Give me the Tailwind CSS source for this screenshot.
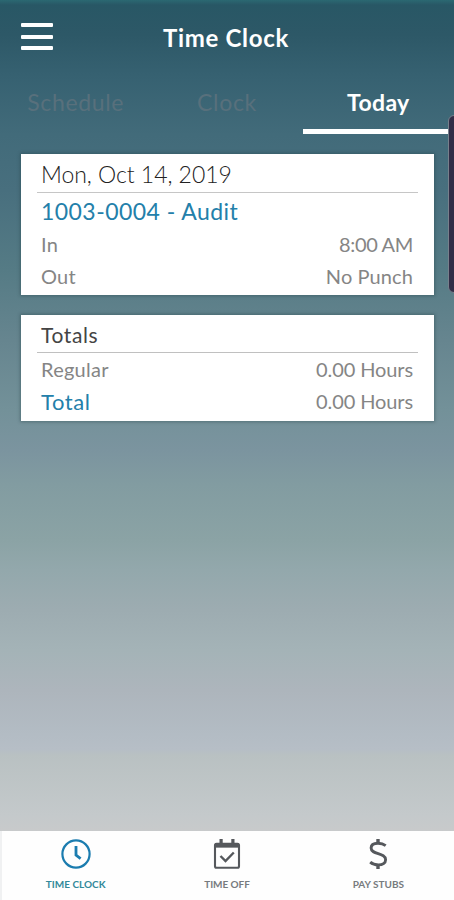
<!DOCTYPE html>
<html lang="en">
<head>
<meta charset="utf-8">
<title>Time Clock</title>
<script src="https://cdn.jsdelivr.net/npm/@tailwindcss/browser@4"></script>
</head>
<body class="relative flex h-[900px] w-[454px] flex-col overflow-hidden font-['Lato',sans-serif] bg-[linear-gradient(180deg,#2b6872_0px,#285765_5px,#2d5867_35px,#366171_75px,#426b7a_135px,#486f7e_190px,#557b85_270px,#66858f_340px,#739199_410px,#7b949f_450px,#829ca1_485px,#8ba3a5_540px,#93a8ac_570px,#9dacb1_610px,#a4b3b7_650px,#adb5bc_690px,#b3bcc4_735px,#b6bec6_749px,#b9c1c2_755px,#c4c9cb_815px,#c8cacb_831px)]">
  <header class="flex h-[75px] shrink-0 items-center px-[21px]">
    <button class="mb-[2px] flex h-[27px] w-8 flex-col justify-between" aria-label="Menu">
      <span class="h-1 w-8 rounded-[1px] bg-white"></span>
      <span class="h-1 w-8 rounded-[1px] bg-white"></span>
      <span class="h-1 w-8 rounded-[1px] bg-white"></span>
    </button>
    <h1 class="flex-1 pr-[34px] text-center text-[24px] font-bold tracking-[0.7px] text-white">Time Clock</h1>
  </header>
  <nav class="grid h-[59px] shrink-0 grid-cols-3 text-center text-[23px] leading-[53px] tracking-[0.65px]">
    <div class="pt-px text-[#58707c]">Schedule</div>
    <div class="pt-px text-[#58707c]">Clock</div>
    <div class="border-b-[5px] border-white pt-px font-bold tracking-[0.35px] text-white">Today</div>
  </nav>
  <main class="flex flex-1 flex-col gap-5 px-[21px] pt-5">
    <section class="h-[141px] w-[413px] bg-white px-4 shadow-[0_0_3px_1px_rgba(35,65,70,0.4)]">
      <h2 class="h-[39px] border-b border-[#c6c6c6] px-1 text-[23px] font-light leading-[41px] tracking-[-0.05px] text-[#222]">Mon, Oct 14, 2019</h2>
      <div class="px-1 text-[23px] leading-[37px] tracking-[0.45px] text-[#2380aa]">1003-0004 - Audit</div>
      <div class="flex justify-between pl-1 pr-[5px] text-[20px] leading-[29px] text-[#858585]"><span class="tracking-[0.3px]">In</span><span class="tracking-[-0.35px]">8:00 AM</span></div>
      <div class="flex justify-between pl-1 pr-[5px] text-[20px] leading-[34px] text-[#858585]"><span class="tracking-[0.2px]">Out</span><span class="tracking-[0.1px]">No Punch</span></div>
    </section>
    <section class="h-[106px] w-[413px] bg-white px-4 shadow-[0_0_3px_1px_rgba(35,65,70,0.4)]">
      <h2 class="h-[38px] border-b border-[#c0c0c0] px-1 text-[21px] leading-[40px] tracking-[0.6px] text-[#444]">Totals</h2>
      <div class="flex justify-between pl-1 pr-[5px] text-[20px] leading-[33px] text-[#858585]"><span class="tracking-[0.25px]">Regular</span><span class="tracking-[-0.1px]">0.00 Hours</span></div>
      <div class="flex justify-between pl-1 pr-[5px] text-[20px] leading-[31px] text-[#858585]"><span class="text-[22px] tracking-[0.6px] text-[#2380aa]">Total</span><span class="tracking-[-0.1px]">0.00 Hours</span></div>
    </section>
  </main>
  <footer class="grid h-[69px] shrink-0 grid-cols-3 bg-[#fefefe] text-[10px] font-bold text-[#777b7e] shadow-[inset_2px_0_0_#f0f1f2]">
    <div class="flex flex-col items-center pt-[7px] text-[#32899a]">
      <svg class="h-8 w-8" viewBox="0 0 32 32" fill="none" stroke="#1b7caf"><circle cx="16" cy="16" r="13.6" stroke-width="2.2"/><path d="M16 8v9l4.6 3.6" stroke-width="2.8"/></svg>
      <span class="mt-[6px] leading-4">TIME CLOCK</span>
    </div>
    <div class="flex flex-col items-center pt-[7px]">
      <svg class="h-8 w-8" viewBox="0 0 32 32" fill="none" stroke="#55585c"><rect x="4" y="5.8" width="24" height="24" rx="1.5" stroke-width="2.1"/><path d="M4 7.4h24" stroke-width="4.5"/><path d="M10.1 1v5M21.9 1v5" stroke-width="3.2"/><path d="M9.5 18l5 5 8.3-8.5" stroke-width="2.4"/></svg>
      <span class="mt-[6px] leading-4 tracking-[-0.05px]">TIME OFF</span>
    </div>
    <div class="flex flex-col items-center pt-[7px]">
      <svg class="h-8 w-8" viewBox="0 0 32 32" fill="none" stroke="#55585c" stroke-width="2.9"><path d="M23.7 7.6C21.5 6 18.8 5.3 16 5.3c-4.4 0-6.9 2-6.9 4.8 0 7 14.5 4.2 14.5 11.6 0 3.3-3 5.2-7.2 5.2-3.2 0-6-.9-8.2-2.8"/><path d="M16 1v4.5M16 26.5V31" stroke-width="3.4"/></svg>
      <span class="mt-[6px] leading-4">PAY STUBS</span>
    </div>
  </footer>
  <div class="absolute left-[448px] top-[115px] h-[178px] w-5 rounded-[6px] border border-[#77808c] bg-[#312d47]"></div>
</body>
</html>
